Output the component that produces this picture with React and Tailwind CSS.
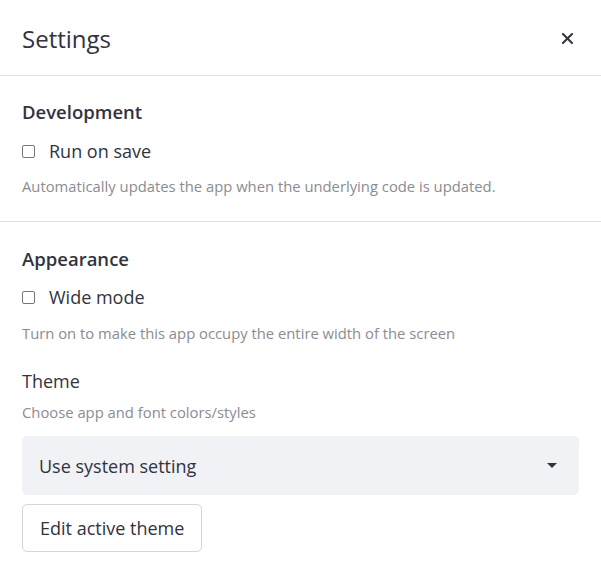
export default function App() {
  const font = { fontFamily: '"Open Sans", "Liberation Sans", sans-serif' };
  return (
    <div className="w-[601px] h-[573px] bg-white text-[#31333f] overflow-hidden" style={font}>
      <div className="h-[76px] flex items-center justify-between pl-[22px] pr-[28px] border-b border-[#e1e1e3]">
        <div className="text-[24px] leading-[28px] mt-[2px]">Settings</div>
        <svg width="11" height="11" viewBox="0 0 11 11" className="mt-[2px]">
          <path d="M1 1L10 10M10 1L1 10" stroke="#31333f" strokeWidth="2" strokeLinecap="square" />
        </svg>
      </div>
      <div className="px-[22px] pt-[24px] pb-[25px] border-b border-[#e1e1e3]">
        <div className="text-[18.5px] leading-[24px] font-semibold">Development</div>
        <div className="flex items-center mt-[15px] h-[24px]">
          <span className="w-[13px] h-[13px] border border-[#767676] rounded-[2px] bg-white"></span>
          <span className="ml-[14px] text-[18px] leading-[24px]">Run on save</span>
        </div>
        <div className="mt-[13px] text-[14.8px] leading-[20px] text-[#8a8c92]">
          Automatically updates the app when the underlying code is updated.
        </div>
      </div>
      <div className="px-[22px] pt-[25px]">
        <div className="text-[18.5px] leading-[24px] font-semibold">Appearance</div>
        <div className="flex items-center mt-[14px] h-[24px]">
          <span className="w-[13px] h-[13px] border border-[#767676] rounded-[2px] bg-white"></span>
          <span className="ml-[14px] text-[18px] leading-[24px]">Wide mode</span>
        </div>
        <div className="mt-[14px] text-[14.8px] leading-[20px] text-[#8a8c92]">
          Turn on to make this app occupy the entire width of the screen
        </div>
        <div className="mt-[26px] text-[18px] leading-[24px]">Theme</div>
        <div className="mt-[9px] text-[14.8px] leading-[20px] text-[#8a8c92]">
          Choose app and font colors/styles
        </div>
        <div className="mt-[14px] h-[59px] bg-[#f0f2f6] rounded-[5px] flex items-center justify-between pl-[17px] pr-[22px]">
          <span className="text-[18px] leading-[24px]">Use system setting</span>
          <svg width="10" height="5" viewBox="0 0 10 5">
            <path d="M0 0H10L5 5Z" fill="#31333f" />
          </svg>
        </div>
        <button className="mt-[9px] h-[48px] px-[17px] border border-[#d6d6d9] rounded-[5px] bg-white text-[18px] leading-[24px] text-[#31333f]">
          Edit active theme
        </button>
      </div>
    </div>
  );
}
